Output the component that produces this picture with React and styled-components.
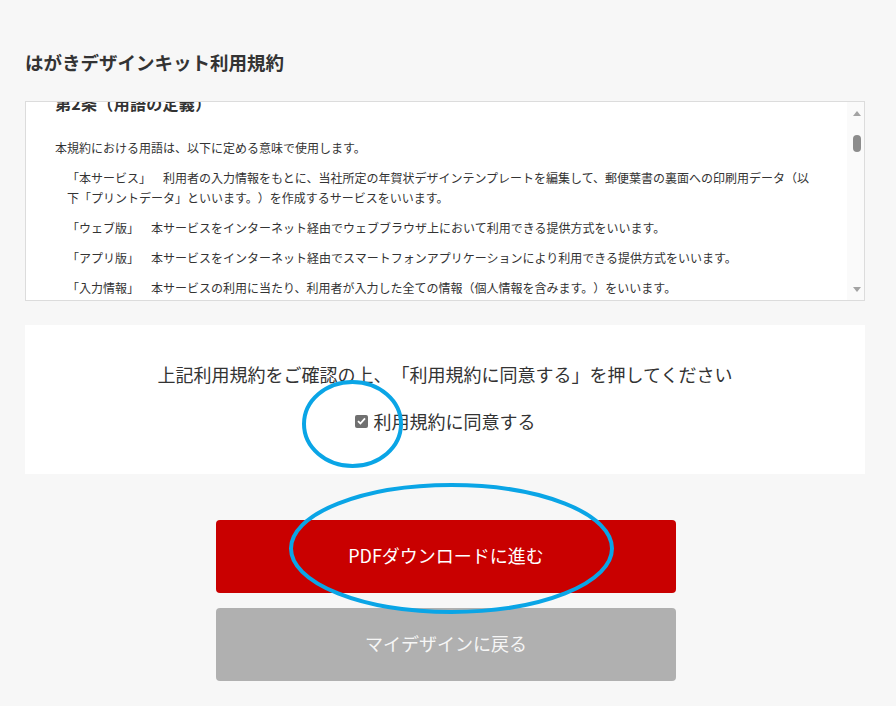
import React from "react";
import styled, { createGlobalStyle } from "styled-components";

const GlobalStyle = createGlobalStyle`
  html, body {
    margin: 0;
    padding: 0;
    background: #f7f7f7;
  }
  body {
    font-family: "Noto Sans CJK JP", "Noto Sans", sans-serif;
    color: #333;
  }
  * {
    text-spacing-trim: space-all;
  }
`;

const Page = styled.div`
  position: relative;
  width: 840px;
  padding: 49px 0 25px 25px;
`;

const Title = styled.h1`
  margin: 0 0 26px;
  font-size: 18.5px;
  line-height: 26px;
  font-weight: 700;
  color: #333;
`;

const TermsBox = styled.div`
  display: flex;
  height: 200px;
  box-sizing: border-box;
  border: 1px solid #dcdcdc;
  background: #fff;
`;

const TermsViewport = styled.div`
  flex: 1;
  overflow: hidden;
  padding: 0 30px 0 29px;
`;

const TermsBody = styled.div`
  margin-top: -11px;
`;

const ArticleHeading = styled.h2`
  margin: 0 0 23px;
  font-size: 16px;
  line-height: 24px;
  font-weight: 700;
  letter-spacing: 0.3px;
  color: #333;
`;

const TermsText = styled.p`
  margin: 0 0 10px;
  padding-left: ${(p) => (p.$indent ? "12px" : "0")};
  font-size: 12px;
  line-height: 20px;
  color: #333;
`;

const ScrollBar = styled.div`
  width: 17px;
  display: flex;
  flex-direction: column;
  align-items: center;
  background: #fafafa;
`;

const Arrow = styled.div`
  width: 0;
  height: 0;
  margin: ${(p) => (p.$dir === "up" ? "9px 0 0 2px" : "0 0 8px 2px")};
  border-left: 4px solid transparent;
  border-right: 4px solid transparent;
  ${(p) =>
    p.$dir === "up"
      ? "border-bottom: 5px solid #a3a3a3;"
      : "border-top: 5px solid #a3a3a3;"}
`;

const Track = styled.div`
  flex: 1;
  display: flex;
  flex-direction: column;
  align-items: center;
  padding-top: 19px;
`;

const Thumb = styled.div`
  width: 8px;
  height: 17px;
  margin-left: 2px;
  border-radius: 4px;
  background: #8c8c8c;
`;

const AgreeCard = styled.section`
  margin-top: 24px;
  height: 149px;
  box-sizing: border-box;
  padding-top: 35px;
  background: #fff;
  display: flex;
  flex-direction: column;
  align-items: center;
  gap: 19px;
`;

const Prompt = styled.p`
  margin: 0;
  font-size: 18px;
  line-height: 28px;
  color: #333;
`;

const CheckLabel = styled.label`
  display: flex;
  align-items: center;
  gap: 6px;
  font-size: 18px;
  line-height: 28px;
  color: #333;
`;

const CheckBox = styled.span`
  width: 13px;
  height: 13px;
  border-radius: 2px;
  background: #707070;
  display: flex;
  align-items: center;
  justify-content: center;
`;

const Actions = styled.div`
  margin-top: 46px;
  display: flex;
  flex-direction: column;
  align-items: center;
  gap: 15px;
`;

const ActionButton = styled.button`
  width: 460px;
  height: 73px;
  margin-left: 2px;
  padding: 0 0 3px;
  border: none;
  border-radius: 4px;
  background: ${(p) => (p.$variant === "primary" ? "#c90000" : "#b0b0b0")};
  color: ${(p) => (p.$variant === "primary" ? "#fff" : "#f6f6f6")};
  font-family: "Noto Sans CJK JP", "Noto Sans", sans-serif;
  font-size: 18px;
  cursor: pointer;
`;

const Annotations = styled.svg`
  position: absolute;
  left: 0;
  top: 0;
  width: 896px;
  height: 706px;
  pointer-events: none;
`;

const definitions = [
  [
    "「本サービス」",
    "利用者の入力情報をもとに、当社所定の年賀状デザインテンプレートを編集して、郵便葉書の裏面への印刷用データ（以下「プリントデータ」といいます。）を作成するサービスをいいます。",
  ],
  ["「ウェブ版」", "本サービスをインターネット経由でウェブブラウザ上において利用できる提供方式をいいます。"],
  ["「アプリ版」", "本サービスをインターネット経由でスマートフォンアプリケーションにより利用できる提供方式をいいます。"],
  ["「入力情報」", "本サービスの利用に当たり、利用者が入力した全ての情報（個人情報を含みます。）をいいます。"],
  ["「個人情報」", "個人情報の保護に関する法律に定める個人情報をいいます。"],
  ["「利用者」", "本規約に同意の上、本サービスを利用する全ての方をいいます。"],
];

const App = () => {
  return (
    <>
      <GlobalStyle />
      <Page>
        <Title>はがきデザインキット利用規約</Title>
        <TermsBox>
          <TermsViewport>
            <TermsBody>
              <ArticleHeading>第2条（用語の定義）</ArticleHeading>
              <TermsText>本規約における用語は、以下に定める意味で使用します。</TermsText>
              {definitions.map(([term, text]) => (
                <TermsText key={term} $indent>
                  {term}　{text}
                </TermsText>
              ))}
            </TermsBody>
          </TermsViewport>
          <ScrollBar>
            <Arrow $dir="up" />
            <Track>
              <Thumb />
            </Track>
            <Arrow $dir="down" />
          </ScrollBar>
        </TermsBox>

        <AgreeCard>
          <Prompt>上記利用規約をご確認の上、「利用規約に同意する」を押してください</Prompt>
          <CheckLabel>
            <CheckBox>
              <svg width="9" height="8" viewBox="0 0 9 8">
                <path d="M1 4.2 L3.4 6.5 L8 1.3" fill="none" stroke="#fff" strokeWidth="1.8" />
              </svg>
            </CheckBox>
            利用規約に同意する
          </CheckLabel>
        </AgreeCard>

        <Actions>
          <ActionButton $variant="primary">PDFダウンロードに進む</ActionButton>
          <ActionButton $variant="secondary">マイデザインに戻る</ActionButton>
        </Actions>

        <Annotations viewBox="0 0 896 706">
          <ellipse cx="352.5" cy="424" rx="48.5" ry="42" fill="none" stroke="#0aa5e6" strokeWidth="4" />
          <ellipse cx="451.5" cy="548.5" rx="160.5" ry="63.5" fill="none" stroke="#0aa5e6" strokeWidth="4" />
        </Annotations>
      </Page>
    </>
  );
};

export default App;
